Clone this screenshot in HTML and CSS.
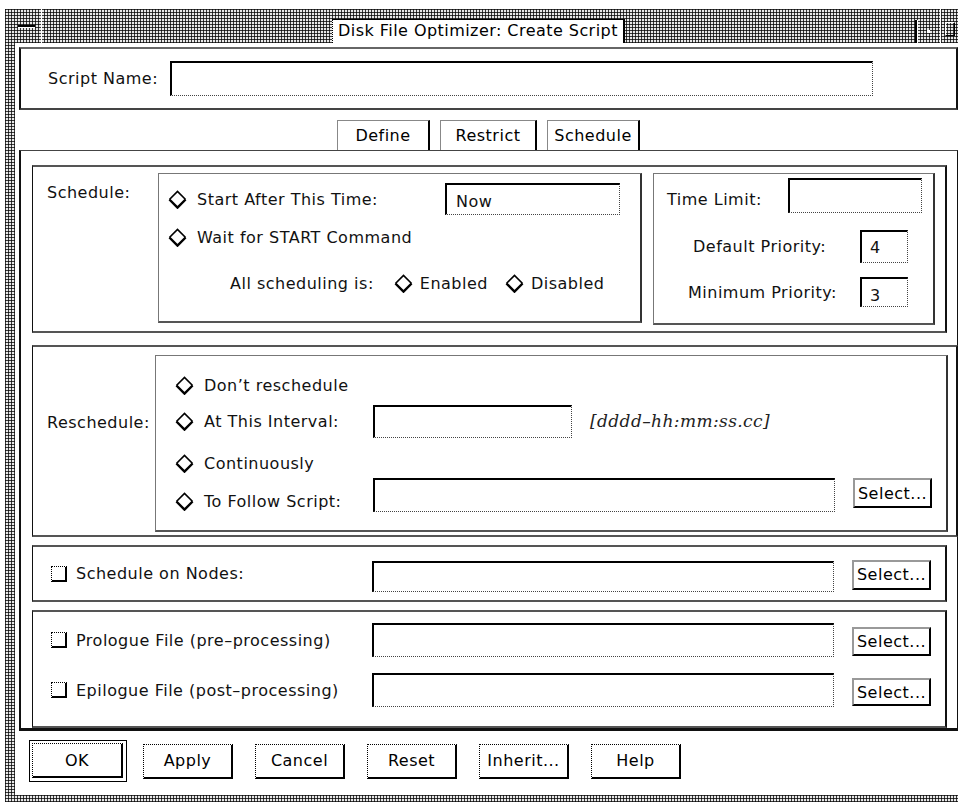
FILE: index.html
```html
<!DOCTYPE html>
<html>
<head>
<meta charset="utf-8">
<title>Disk File Optimizer: Create Script</title>
<link rel="stylesheet" href="styles.css">
</head>
<body>
<svg class="defs" width="0" height="0" aria-hidden="true">
  <defs>
    <symbol id="dia" viewBox="0 0 20 20">
      <path d="M1.5 10 L10 1.5 L18.5 10" fill="none" stroke="#000" stroke-width="1.7"/>
      <path d="M1.5 10 L10 18.5 L18.5 10" fill="none" stroke="#000" stroke-width="2.6"/>
    </symbol>
  </defs>
</svg>
<div class="win">
  <div class="titlebar">
    <div class="tb-menu"><span class="tb-dash"></span></div>
    <div class="tb-center"><div class="tb-title">Disk File Optimizer: Create Script</div></div>
    <div class="tb-min"><span class="tb-dot"></span></div>
    <div class="tb-max"><span class="tb-box"></span></div>
  </div>
  <div class="client">
    <div class="namebar">
      <span class="lbl">Script Name:</span>
      <div class="field f-name"></div>
    </div>
    <div class="tabs">
      <div class="tab t-define">Define</div>
      <div class="tab t-restrict">Restrict</div>
      <div class="tab t-schedule">Schedule</div>
    </div>
    <div class="page">
      <div class="panel p-sched">
        <div class="plabel pl-sched">Schedule:</div>
        <div class="box radios">
          <div class="row r1">
            <span class="radio rw1"><svg class="dia"><use href="#dia"/></svg>Start After This Time:</span>
            <div class="field f-now">Now</div>
          </div>
          <div class="row r2">
            <span class="radio"><svg class="dia"><use href="#dia"/></svg>Wait for START Command</span>
          </div>
          <div class="row r3">
            <span class="all">All scheduling is:</span>
            <span class="radio en"><svg class="dia"><use href="#dia"/></svg>Enabled</span>
            <span class="radio dis"><svg class="dia"><use href="#dia"/></svg>Disabled</span>
          </div>
        </div>
        <div class="box limits">
          <div class="row l1">
            <span class="lim-lbl">Time Limit:</span>
            <div class="field f-limit"></div>
          </div>
          <div class="row l2">
            <span class="lim-lbl">Default Priority:</span>
            <div class="field f-pri f-def">4</div>
          </div>
          <div class="row l3">
            <span class="lim-lbl">Minimum Priority:</span>
            <div class="field f-pri f-min">3</div>
          </div>
        </div>
      </div>

      <div class="panel p-resched">
        <div class="plabel pl-resched">Reschedule:</div>
        <div class="box rbox">
          <div class="row q1">
            <span class="radio rw2"><svg class="dia"><use href="#dia"/></svg>Don’t reschedule</span>
          </div>
          <div class="row q2">
            <span class="radio rw2"><svg class="dia"><use href="#dia"/></svg>At This Interval:</span>
            <div class="field f-int"></div>
            <span class="hint">[dddd–hh:mm:ss.cc]</span>
          </div>
          <div class="row q3">
            <span class="radio rw2"><svg class="dia"><use href="#dia"/></svg>Continuously</span>
          </div>
          <div class="row q4">
            <span class="radio rw2"><svg class="dia"><use href="#dia"/></svg>To Follow Script:</span>
            <div class="field f-long"></div>
            <div class="btn sel">Select...</div>
          </div>
        </div>
      </div>

      <div class="panel p-nodes">
        <div class="row c1">
          <span class="check"><span class="cb"></span>Schedule on Nodes:</span>
          <div class="field f-long f-nodes"></div>
          <div class="btn sel">Select...</div>
        </div>
      </div>

      <div class="panel p-pro">
        <div class="row c2">
          <span class="check"><span class="cb"></span>Prologue File (pre–processing)</span>
          <div class="field f-long f-pro"></div>
          <div class="btn sel s-pro">Select...</div>
        </div>
        <div class="row c3">
          <span class="check"><span class="cb"></span>Epilogue File (post–processing)</span>
          <div class="field f-long f-pro"></div>
          <div class="btn sel s-epi">Select...</div>
        </div>
      </div>
    </div>
    <div class="buttons">
      <div class="default-ring"><div class="btn pb">OK</div></div>
      <div class="btn pb">Apply</div>
      <div class="btn pb">Cancel</div>
      <div class="btn pb">Reset</div>
      <div class="btn pb">Inherit...</div>
      <div class="btn pb">Help</div>
    </div>
  </div>
</div>
</body>
</html>
```

FILE: styles.css
```css
* { box-sizing: border-box; }
html, body { margin: 0; padding: 0; background: #fff; }
body {
  width: 962px;
  height: 802px;
  overflow: hidden;
  font-family: "DejaVu Sans", "Liberation Sans", sans-serif;
  font-size: 16px;
  line-height: 19px;
  letter-spacing: 0.5px;
  color: #111;
}
.defs { position: absolute; width: 0; height: 0; overflow: hidden; }

/* dithered window frame: 3px grid of dark lines around light cells */
.win {
  margin: 9px 0 0 5px;
  width: 953px;
  height: 793px;
  display: flex;
  flex-direction: column;
  background-color: #e8e8e8;
  background-image:
    linear-gradient(90deg, rgba(0,0,0,0.75) 1px, transparent 1px),
    linear-gradient(180deg, rgba(0,0,0,0.75) 1px, transparent 1px);
  background-size: 3px 3px;
}

.titlebar {
  height: 34px;
  display: flex;
  flex: none;
}
.tb-menu {
  width: 37px;
  border-right: 1px solid #fff;
  display: flex;
  align-items: center;
  justify-content: center;
  padding-left: 6px;
}
.tb-dash { width: 17px; height: 2px; background: #000; box-shadow: 0 1px 0 #fff; }
.tb-center {
  flex: 1;
  display: flex;
  justify-content: center;
  align-items: flex-end;
}
.tb-title {
  width: 293px;
  height: 24px;
  background: #fff;
  border-top: 1px solid #000;
  border-left: 1px dotted #000;
  border-right: 2px solid #000;
  text-align: center;
  line-height: 22px;
  letter-spacing: 0.45px;
  color: #000;
}
.tb-min {
  width: 25px;
  border-left: 2px solid #000;
  box-shadow: inset 1px 0 0 #fff;
  display: flex;
  align-items: center;
  justify-content: center;
  margin: 11px 0 0;
}
.tb-dot { width: 3px; height: 3px; background: #fff; }
.tb-max {
  width: 18px;
  border-left: 1px solid #fff;
  display: flex;
  align-items: center;
  justify-content: center;
  padding-top: 6px;
}
.tb-box { width: 10px; height: 14px; border: 1px solid #fff; border-bottom-color: #000; border-right-color: #000; }

.client {
  flex: 1;
  margin: 0 0 7px 10px;
  background: #fff;
  padding: 4px 0 0 4px;
  display: flex;
  flex-direction: column;
}

/* generic widgets */
.field {
  background: #fff;
  border-style: solid dotted dotted solid;
  border-width: 2px 1px 1px 2px;
  border-color: #000 #444 #444 #000;
  flex: none;
}
.btn {
  background: #fff;
  border-style: solid;
  border-width: 2px 2px 2px 2px;
  border-color: #999 #000 #000 #999;
  display: flex;
  align-items: center;
  justify-content: center;
  flex: none;
  color: #000;
}
.panel {
  border-style: solid;
  border-width: 2px 2px 2px 1px;
  border-color: #555 #111 #555 #111;
}
.box {
  border-style: solid;
  border-width: 1px 2px 2px 1px;
  border-color: #777 #333 #555 #777;
}
.row { display: flex; align-items: center; }
.radio { display: inline-flex; align-items: center; white-space: nowrap; }
.dia { width: 19px; height: 19px; margin-right: 10px; flex: none; }
.check { display: inline-flex; align-items: center; white-space: nowrap; }
.cb {
  width: 16px; height: 16px; margin-right: 9px; flex: none;
  border-style: dotted solid solid dotted;
  border-width: 1px 2px 2px 1px;
  border-color: #000;
}

/* script name bar */
.namebar {
  height: 63px;
  display: flex;
  align-items: center;
  padding-left: 27px;
  border-style: solid;
  border-width: 2px 2px 2px 2px;
  border-color: #666 #111 #444 #111;
  flex: none;
}
.namebar .lbl { width: 122px; }
.f-name { width: 703px; height: 35px; }

/* tabs */
.tabs {
  height: 40px;
  display: flex;
  justify-content: center;
  align-items: flex-end;
  gap: 10px;
  flex: none;
}
.tab {
  height: 30px;
  border-style: solid;
  border-width: 1px 2px 0 1px;
  border-color: #888 #000 #000 #888;
  display: flex;
  align-items: center;
  justify-content: center;
  color: #000;
}
.t-define { width: 93px; }
.t-restrict { width: 97px; }
.t-schedule { width: 93px; }

/* tab page */
.page {
  height: 581px;
  flex: none;
  border-style: solid;
  border-width: 1px 1px 3px 2px;
  border-color: #444 #111 #111 #111;
  padding: 14px 10px 0 11px;
  display: flex;
  flex-direction: column;
}

/* schedule panel */
.p-sched {
  height: 168px;
  flex: none;
  display: flex;
  align-items: flex-start;
  padding-top: 6px;
}
.plabel { padding-left: 14px; flex: none; }
.pl-sched { width: 125px; margin-top: 10px; }
.radios {
  width: 484px;
  height: 150px;
  padding: 9px 0 0 9px;
}
.rw1 { width: 277px; }
.f-now { width: 175px; height: 32px; padding: 7px 0 0 9px; }
.r2 { margin-top: 10px; height: 24px; }
.r3 { margin-top: 22px; height: 24px; }
.all { margin-left: 62px; }
.en { margin-left: 20px; }
.en .dia, .dis .dia { margin-right: 7px; }
.dis { margin-left: 17px; }

.limits {
  width: 282px;
  height: 152px;
  margin-left: 11px;
  padding: 4px 0 0 0;
}
.lim-lbl { white-space: nowrap; }
.l1 .lim-lbl { margin-left: 13px; margin-top: 8px; }
.f-limit { width: 134px; height: 35px; margin-left: auto; margin-right: 11px; }
.l2 { margin-top: 17px; }
.l2 .lim-lbl { margin-left: 39px; }
.l3 { margin-top: 14px; }
.l3 .lim-lbl { margin-left: 34px; }
.f-pri { width: 48px; margin-left: auto; margin-right: 25px; padding-left: 8px; }
.f-def { height: 33px; padding-top: 6px; }
.f-min { height: 30px; padding-top: 7px; }

/* reschedule panel */
.p-resched {
  height: 192px;
  flex: none;
  margin-top: 12px;
  margin-right: -11px;
  display: flex;
  align-items: flex-start;
  padding-top: 8px;
}
.pl-resched { width: 122px; margin-top: 58px; }
.rbox {
  width: 793px;
  height: 177px;
  padding: 17px 0 0 19px;
}
.rw2 { width: 198px; }
.q1 { height: 24px; }
.q2 { margin-top: 8px; }
.f-int { width: 199px; height: 33px; }
.hint {
  margin-left: 18px;
  font-family: "DejaVu Serif", "Liberation Serif", serif;
  font-style: italic;
  font-size: 17px;
  letter-spacing: 0.4px;
  color: #222;
}
.q3 { margin-top: 13px; height: 24px; }
.q4 { margin-top: 3px; align-items: flex-start; }
.q4 .radio { margin-top: 14px; }
.f-long { width: 462px; height: 34px; }
.sel { width: 79px; height: 30px; margin-left: 18px; }

/* nodes panel */
.p-nodes {
  height: 57px;
  flex: none;
  margin-top: 8px;
  padding: 0 0 0 18px;
  display: flex;
  align-items: center;
}
.c1 { width: 100%; }
.check { width: 321px; }
.f-nodes { height: 31px; margin-top: 6px; }
.c1 .sel { margin-top: 2px; }

/* prologue panel */
.p-pro {
  height: 118px;
  flex: none;
  margin-top: 8px;
  padding: 11px 0 0 18px;
}
.c3 { margin-top: 16px; }
.s-pro { height: 29px; margin-top: 3px; }
.s-epi { height: 28px; margin-top: 4px; }

/* bottom buttons */
.buttons {
  height: 60px;
  flex: none;
  display: flex;
  align-items: center;
  padding-left: 10px;
}
.default-ring {
  border: 1px solid #000;
  padding: 2px 3px 3px 2px;
  margin-right: 16px;
}
.pb {
  width: 90px; height: 35px; margin-right: 22px;
  border-style: dotted solid solid dotted;
  border-width: 1px 2px 2px 1px;
  border-color: #000;
}
.default-ring .pb { width: 91px; margin-right: 0; }
```
